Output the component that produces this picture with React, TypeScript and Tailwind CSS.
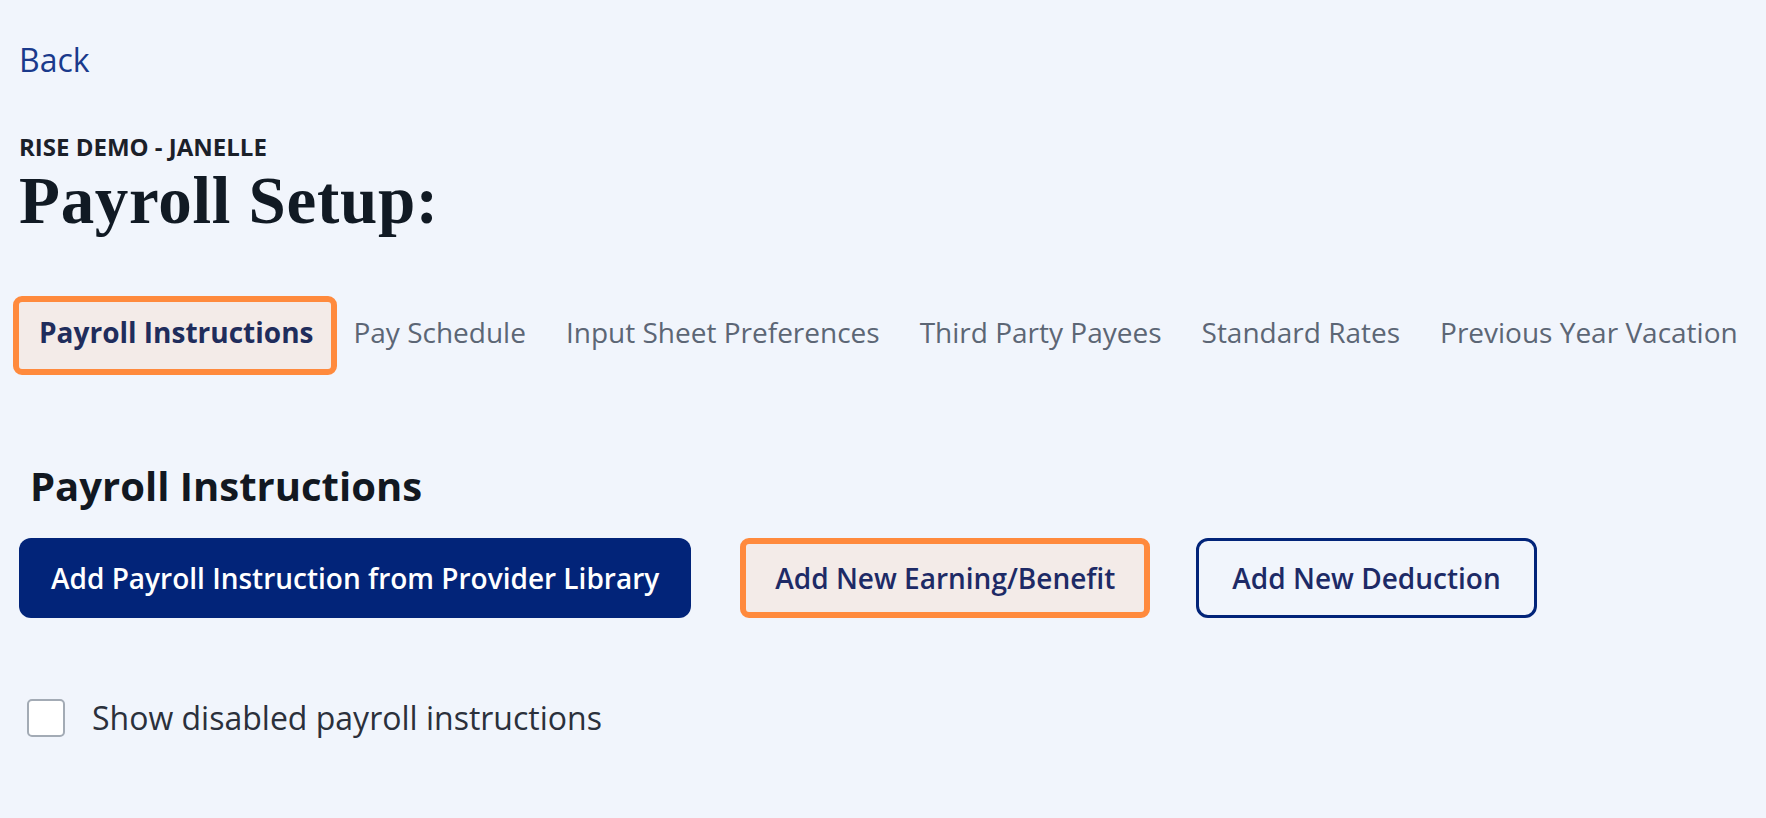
import { useState } from "react";

// Pestañas de la configuración de nómina
const tabs = [
  "Payroll Instructions",
  "Pay Schedule",
  "Input Sheet Preferences",
  "Third Party Payees",
  "Standard Rates",
  "Previous Year Vacation",
];

export default function App() {
  const [active, setActive] = useState(0);
  const [showDisabled, setShowDisabled] = useState(false);

  return (
    <div className="min-h-screen bg-[#f1f5fc] pl-[19px] pt-[36px] font-['Open_Sans',sans-serif]">
      <a href="#" className="block text-[32px] leading-[48px] text-[#1a3a8c]">
        Back
      </a>

      <div className="mt-[47px] text-[24px] font-bold leading-[32px] text-[#1b2029]">
        RISE DEMO - JANELLE
      </div>
      <h1 className="mt-[4px] font-['Liberation_Serif',serif] text-[67px] font-bold leading-[66px] tracking-[0.7px] text-[#111a24]">
        Payroll Setup:
      </h1>

      <div className="ml-[-6px] mt-[63px] flex items-start">
        {tabs.map((t, i) =>
          i === active ? (
            <button
              key={t}
              onClick={() => setActive(i)}
              className="mr-[-4px] rounded-[9px] border-[6px] border-[#ff8a3d] bg-[#f3ebe8] pb-[17px] pl-[20px] pr-[18px] pt-[10px] text-[28px] font-bold leading-[40px] text-[#1f2d5c]"
            >
              {t}
            </button>
          ) : (
            <button
              key={t}
              onClick={() => setActive(i)}
              className="px-[20px] pt-[16px] text-[28px] leading-[40px] text-[#5c6675]"
            >
              {t}
            </button>
          )
        )}
      </div>

      <h2 className="ml-[11px] mt-[86px] text-[40px] font-bold leading-[50px] text-[#121821]">
        Payroll Instructions
      </h2>

      <div className="mt-[27px] flex items-center">
        <button className="h-[80px] rounded-[12px] bg-[#022479] px-[32px] text-[28px] font-semibold text-white">
          Add Payroll Instruction from Provider Library
        </button>
        <button className="ml-[49px] h-[80px] rounded-[9px] border-[6px] border-[#ff8a3d] bg-[#f3ebe8] px-[29px] text-[28px] font-semibold text-[#1d2a66]">
          Add New Earning/Benefit
        </button>
        <button className="ml-[46px] h-[80px] rounded-[12px] border-[3px] border-[#022479] bg-[#f1f5fc] px-[33px] text-[28px] font-semibold text-[#1d2a66]">
          Add New Deduction
        </button>
      </div>

      <label className="ml-[8px] mt-[78px] flex items-center gap-[27px]">
        <input
          type="checkbox"
          checked={showDisabled}
          onChange={(e) => setShowDisabled(e.target.checked)}
          className="h-[38px] w-[38px] appearance-none rounded-[5px] border-2 border-[#a3abb5] bg-white"
        />
        <span className="text-[32px] leading-[44px] text-[#2b303b]">Show disabled payroll instructions</span>
      </label>
    </div>
  );
}
